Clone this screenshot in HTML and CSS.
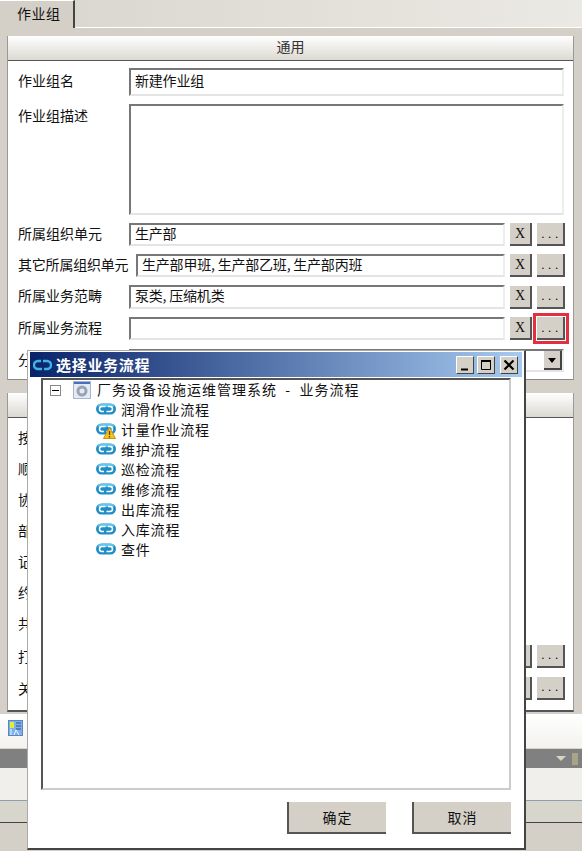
FILE: index.html
```html
<!DOCTYPE html>
<html lang="zh-CN">
<head>
  <meta charset="UTF-8">
  <title>作业组</title>
  <link rel="stylesheet" href="styles.css">
</head>
<body>
  <svg class="defs" width="0" height="0">
    <defs>
      <symbol id="flow" viewBox="0 0 20 12">
        <rect x="0" y="0.5" width="20" height="11" rx="5.5" fill="#1f8ec6"></rect>
        <rect x="2" y="1" width="16" height="3" rx="1.5" fill="#62c4ea"></rect>
        <path d="M9.5 3.5H6a2.5 2.5 0 0 0 0 5h2M10.5 8.5H14a2.5 2.5 0 0 0 0-5h-2" fill="none" stroke="#fff" stroke-width="1.5"></path>
      </symbol>
    </defs>
  </svg>

  <div class="tabbar">
    <div class="tab">作业组</div>
  </div>

  <section class="panel general">
    <h2 class="panel-head">通用</h2>
    <div class="rows">
      <div class="row row-full">
        <label>作业组名</label>
        <div class="field">新建作业组</div>
      </div>
      <div class="row row-desc">
        <label>作业组描述</label>
        <div class="field"></div>
      </div>
      <div class="row">
        <label>所属组织单元</label>
        <div class="field">生产部</div>
        <button class="btn">X</button>
        <button class="btn more">...</button>
      </div>
      <div class="row row-wide">
        <label>其它所属组织单元</label>
        <div class="field">生产部甲班, 生产部乙班, 生产部丙班</div>
        <button class="btn">X</button>
        <button class="btn more">...</button>
      </div>
      <div class="row">
        <label>所属业务范畴</label>
        <div class="field">泵类, 压缩机类</div>
        <button class="btn">X</button>
        <button class="btn more">...</button>
      </div>
      <div class="row">
        <label>所属业务流程</label>
        <div class="field"></div>
        <button class="btn">X</button>
        <button class="btn more marked">...</button>
      </div>
      <div class="row row-select">
        <label>分类</label>
        <div class="field select"><span class="arrow"></span></div>
      </div>
    </div>
  </section>

  <section class="panel detail">
    <div class="panel-head"></div>
    <ul class="peek">
      <li>按时</li>
      <li>顺序</li>
      <li>协同</li>
      <li>部门</li>
      <li>记录</li>
      <li>约束</li>
      <li>共享</li>
      <li class="with-btn">打印<span class="btn-pair"><button class="btn">X</button><button class="btn more">...</button></span></li>
      <li class="with-btn">关联<span class="btn-pair"><button class="btn">X</button><button class="btn more">...</button></span></li>
    </ul>
  </section>

  <div class="toolbar">
    <svg class="tool-icon" width="15" height="16" viewBox="0 0 15 16">
      <rect x="0.5" y="0.5" width="14" height="15" fill="#7fb0ea" stroke="#5a86c0"></rect>
      <rect x="2" y="2" width="4" height="6" fill="#e2ec3c"></rect>
      <path d="M8 3h5M8 6h5M8 9h5" stroke="#27508c" fill="none"></path>
      <path d="M3 9v6M6 15l2-5 3 5" stroke="#f4f6fa" fill="none"></path>
    </svg>
  </div>
  <div class="dock-title">
    <span class="dock-arrow"></span>
    <span class="dock-pin"></span>
  </div>
  <div class="dock-body"></div>
  <div class="dock-foot"></div>

  <div class="dialog">
    <div class="dialog-title">
      <svg class="title-icon" width="19" height="12" viewBox="0 0 19 12">
        <path d="M8 2H5a4 4 0 0 0 0 8h4M11 10h3a4 4 0 0 0 0-8h-4" fill="none" stroke="#3fb4e6" stroke-width="2.4"></path>
      </svg>
      <span class="title-text">选择业务流程</span>
      <div class="win-btns">
        <button class="win-btn"><svg width="12" height="12" viewBox="0 0 12 12"><path d="M2 10.5h7" stroke="#000" stroke-width="2"></path></svg></button>
        <button class="win-btn"><svg width="12" height="12" viewBox="0 0 12 12"><path d="M1.5 2.5h9v8h-9z" fill="none" stroke="#000"></path><path d="M1 2h10" stroke="#000" stroke-width="2"></path></svg></button>
        <button class="win-btn close"><svg width="12" height="12" viewBox="0 0 12 12"><path d="M1.5 1.5l9 9M10.5 1.5l-9 9" stroke="#000" stroke-width="2.2"></path></svg></button>
      </div>
    </div>
    <div class="tree">
      <div class="tree-root">
        <span class="expander"></span>
        <svg class="root-icon" width="18" height="18" viewBox="0 0 18 18">
          <rect x="0.5" y="0.5" width="17" height="17" fill="#e6eaf4" stroke="#a9b4d0"></rect>
          <rect x="1" y="1" width="16" height="2" fill="#4a6fc0"></rect>
          <circle cx="9" cy="10" r="4" fill="none" stroke="#98a4b6" stroke-width="3"></circle>
        </svg>
        <span class="root-name">厂务设备设施运维管理系统 &nbsp;-&nbsp; 业务流程</span>
      </div>
      <ul class="tree-list">
        <li><svg class="flow"><use href="#flow"></use></svg>润滑作业流程</li>
        <li>
          <span class="flow-wrap">
            <svg class="flow"><use href="#flow"></use></svg>
            <svg class="warn" width="13" height="12" viewBox="0 0 13 12">
              <path d="M6.5 0.5L12.5 11.5H0.5z" fill="#f6c21c" stroke="#c8940f"></path>
              <path d="M6.5 4v4M6.5 9v1.5" stroke="#5b4300" stroke-width="1.3"></path>
            </svg>
          </span>计量作业流程
        </li>
        <li><svg class="flow"><use href="#flow"></use></svg>维护流程</li>
        <li><svg class="flow"><use href="#flow"></use></svg>巡检流程</li>
        <li><svg class="flow"><use href="#flow"></use></svg>维修流程</li>
        <li><svg class="flow"><use href="#flow"></use></svg>出库流程</li>
        <li><svg class="flow"><use href="#flow"></use></svg>入库流程</li>
        <li><svg class="flow"><use href="#flow"></use></svg>查件</li>
      </ul>
    </div>
    <div class="dialog-foot">
      <button class="cmd">确定</button>
      <button class="cmd">取消</button>
    </div>
  </div>
</body>
</html>
```

FILE: styles.css
```css
:root {
  --face: #d4d0c8;
  --line: #555555;
  --text: #111111;
}

* {
  box-sizing: border-box;
}

html, body {
  margin: 0;
  padding: 0;
  height: 851px;
  overflow: hidden;
}

body {
  position: relative;
  background: var(--face);
  color: var(--text);
  font-family: "Noto Sans CJK SC", "Liberation Sans", sans-serif;
  font-size: 14px;
  line-height: 20px;
}

.defs {
  position: absolute;
}

button {
  font-family: inherit;
  color: inherit;
  padding: 0;
}

.tabbar {
  height: 28px;
  background: linear-gradient(to right, #d8d5cd, #ebe9e3);
  border-bottom: 1px solid #fff;
}

.tab {
  width: 75px;
  height: 28px;
  padding: 2px 0 0 17px;
  background: var(--face);
  border-top: 1px solid #fff;
  border-right: 2px solid #444;
  letter-spacing: 0.5px;
}

.panel {
  margin: 8px 8px 0 7px;
  background: #fff;
  border-left: 1px solid #999;
  border-right: 1px solid #999;
  border-bottom: 1px solid #888;
}

.panel-head {
  margin: 0;
  height: 25px;
  font-size: 14px;
  font-weight: normal;
  text-align: center;
  color: #333;
  background: linear-gradient(to bottom, #fff, #dcd9d2);
  border-bottom: 1px solid var(--line);
}

.general {
  height: 344px;
}

.rows {
  display: flex;
  flex-direction: column;
  gap: 8px;
  padding: 7px 8px 0 10px;
}

.row {
  display: flex;
  align-items: center;
  height: 23px;
}

.row label {
  width: 111px;
  flex: none;
  padding-bottom: 4px;
}

.field {
  flex: none;
  width: 376px;
  height: 100%;
  padding: 0 4px;
  line-height: 17px;
  letter-spacing: -0.2px;
  background: #fff;
  border: 2px solid;
  border-color: #777 #eee #e4e4e4 #777;
  white-space: nowrap;
}

.row-full .field,
.row-desc .field {
  width: 435px;
}

.row-full {
  height: 28px;
}

.row-full .field {
  line-height: 21px;
}

.row-desc {
  align-items: flex-start;
  height: 111px;
}

.row-desc label {
  padding: 1px 0 0;
}

.row-wide label {
  width: 118px;
  letter-spacing: -0.2px;
  white-space: nowrap;
}

.row-wide .field {
  width: 369px;
}

.row-wide + .row {
  height: 24px;
}

.row-select {
  margin-top: 1px;
}

.select {
  position: relative;
  width: 435px;
}

.arrow {
  position: absolute;
  top: 0;
  right: 0;
  width: 18px;
  height: 19px;
  background: var(--face);
  border-right: 2px solid #444;
  border-bottom: 2px solid #444;
}

.arrow::after {
  content: "";
  position: absolute;
  left: 4px;
  top: 7px;
  border: 4px solid transparent;
  border-top: 5px solid #000;
  border-bottom: 0;
}

.btn {
  flex: none;
  width: 22px;
  height: 23px;
  margin-left: 5px;
  font-family: "Liberation Serif", serif;
  font-size: 14px;
  line-height: 18px;
  background: var(--face);
  border: 0;
  border-right: 2px solid var(--line);
  border-bottom: 2px solid var(--line);
}

.more {
  width: 28px;
  font-size: 13px;
  letter-spacing: 3.6px;
  text-indent: 3px;
}

.marked {
  outline: 3px solid #e3303f;
  outline-offset: 1px;
}

.detail {
  height: 319px;
  margin-top: 13px;
  position: relative;
  border-bottom: 2px solid #555;
}

.peek {
  list-style: none;
  margin: 0;
  padding: 3px 0 0 10px;
}

.peek li {
  display: flex;
  justify-content: space-between;
  align-items: center;
  height: 31px;
  padding-right: 8px;
}

.peek .with-btn {
  height: 32px;
}

.peek li:not(.with-btn) + .with-btn {
  margin-top: 2px;
}

.btn-pair {
  display: flex;
}

.toolbar {
  height: 35px;
  margin-top: 2px;
  padding: 6px 0 0 8px;
  background: linear-gradient(to bottom, #fff, #f3f2ee);
  border-bottom: 1px solid #d8d6d0;
}

.tool-icon {
  display: block;
}

.dock-title {
  display: flex;
  justify-content: flex-end;
  align-items: center;
  gap: 6px;
  height: 19px;
  padding-right: 4px;
  background: #808080;
}

.dock-arrow {
  border: 5px solid transparent;
  border-top: 5px solid #d8d4c0;
  border-bottom: 0;
}

.dock-pin {
  width: 6px;
  height: 12px;
  background: #a8a488;
}

.dock-body {
  height: 33px;
  background: #f0efeb;
  border-bottom: 1px solid #8aa0b0;
}

.dock-foot {
  height: 22px;
  background: #d8d5cd;
  border-bottom: 1px solid #444;
}

.dialog {
  position: absolute;
  left: 27px;
  top: 350px;
  width: 499px;
  height: 500px;
  padding: 1px 2px 0;
  background: #fff;
  border: 1px solid #aaa;
  border-right: 2px solid #444;
  border-bottom: 2px solid #444;
}

.dialog-title {
  display: flex;
  align-items: center;
  height: 25px;
  padding: 0 4px 0 3px;
  color: #fff;
  background: linear-gradient(to right, #0a246a, #a6caf0);
}

.title-icon {
  flex: none;
}

.title-text {
  margin-left: 4px;
  font-size: 15px;
  font-weight: bold;
  letter-spacing: 0.7px;
}

.win-btns {
  display: flex;
  margin-left: auto;
}

.win-btn {
  display: flex;
  align-items: center;
  justify-content: center;
  width: 18px;
  height: 18px;
  margin-left: 3px;
  background: var(--face);
  border: 0;
  border-top: 1px solid #fff;
  border-left: 1px solid #fff;
  border-right: 1px solid #444;
  border-bottom: 1px solid #444;
}

.win-btn.close {
  margin-left: 5px;
}

.tree {
  width: 470px;
  height: 412px;
  margin: 1px 0 0 11px;
  border: 2px solid;
  border-color: #555 #ccc #ccc #555;
  letter-spacing: 0.8px;
}

.tree-root {
  display: flex;
  align-items: center;
  height: 20px;
  padding-left: 7px;
  white-space: nowrap;
}

.expander {
  position: relative;
  flex: none;
  width: 11px;
  height: 11px;
  margin-right: 12px;
  border: 1px solid #888;
}

.expander::after {
  content: "";
  position: absolute;
  left: 1px;
  top: 4px;
  width: 7px;
  height: 1px;
  background: #000;
}

.root-icon {
  flex: none;
  margin-right: 6px;
}

.root-name {
  padding-bottom: 3px;
  letter-spacing: 1px;
}

.tree-list {
  list-style: none;
  margin: -1px 0 0;
  padding: 0 0 0 53px;
}

.tree-list li {
  display: flex;
  align-items: center;
  height: 20px;
}

.flow {
  flex: none;
  width: 20px;
  height: 12px;
  margin-right: 5px;
}

.flow-wrap {
  position: relative;
  display: flex;
  flex: none;
}

.warn {
  position: absolute;
  left: 7px;
  top: 4px;
}

.dialog-foot {
  display: flex;
  justify-content: flex-end;
  gap: 26px;
  padding: 12px 11px 0 0;
}

.cmd {
  width: 99px;
  height: 32px;
  font-size: 14px;
  background: var(--face);
  border: 0;
  border-left: 2px solid var(--line);
  border-bottom: 2px solid var(--line);
  letter-spacing: 1px;
}
```
